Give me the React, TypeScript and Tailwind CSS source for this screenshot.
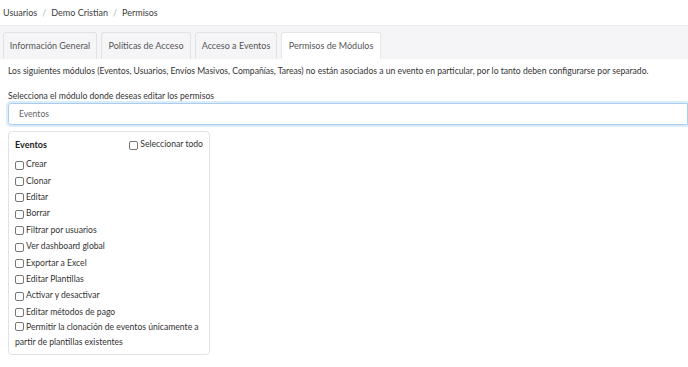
import React from "react";

const tabs = [
  { label: "Información General", width: "w-[94px]" },
  { label: "Políticas de Acceso", width: "w-[90px]" },
  { label: "Acceso a Eventos", width: "w-[82px]" },
  { label: "Permisos de Módulos", width: "w-[100px]", active: true },
];

const permisos = [
  "Crear",
  "Clonar",
  "Editar",
  "Borrar",
  "Filtrar por usuarios",
  "Ver dashboard global",
  "Exportar a Excel",
  "Editar Plantillas",
  "Activar y desactivar",
  "Editar métodos de pago",
];

function Box() {
  return <span className="mt-[1px] inline-block h-[9px] w-[9px] shrink-0 rounded-[2px] border border-[#767676] bg-white" />;
}

export default function App() {
  return (
    <div className="h-[367px] w-[688px] overflow-hidden bg-white font-['Lato',sans-serif] text-[8.6px] text-[#333]">
      <div className="flex h-[26px] items-center gap-[5px] border-b border-[#ececec] pl-[3px] text-[9px] text-[#3d3d3d]">
        <span>Usuarios</span>
        <span className="text-[#b5b5b5]">/</span>
        <span>Demo Cristian</span>
        <span className="text-[#b5b5b5]">/</span>
        <span>Permisos</span>
      </div>

      <div className="flex h-[33px] items-end gap-[4px] bg-[#f5f5f7] pl-[3px]">
        {tabs.map((t) => (
          <div
            key={t.label}
            className={`flex h-[27px] ${t.width} items-center justify-center rounded-t-[3px] border border-b-0 text-[9px] ${
              t.active ? "border-[#e6e6e6] bg-white text-[#555]" : "border-[#e2e2e4] bg-[#f5f5f7] text-[#555]"
            }`}
          >
            {t.label}
          </div>
        ))}
      </div>

      <div className="px-[8px]">
        <p className="mt-[7px] leading-[11px]">
          Los siguientes módulos (Eventos, Usuarios, Envíos Masivos, Compañías, Tareas) no están asociados a un evento en particular, por lo
          tanto deben configurarse por separado.
        </p>
        <div className="mt-[14px] leading-[11px]">Selecciona el módulo donde deseas editar los permisos</div>
        <div className="mr-[-8px] mt-[1px] flex h-[22px] items-center rounded-l-[3px] border border-[#a9cdef] pl-[10px] text-[#666] shadow-[0_0_0_2px_rgba(180,212,242,0.45)]">
          Eventos
        </div>

        <div className="mt-[6px] w-[202px] rounded-[4px] border border-[#e2e2e2] px-[6px] pb-[5px] pt-[6px]">
          <div className="flex items-center justify-between">
            <span className="text-[9px] font-bold text-[#222]">Eventos</span>
            <label className="flex items-center gap-[2px] text-[#333]">
              <Box />
              Seleccionar todo
            </label>
          </div>
          <div className="mt-[5px] flex flex-col">
            {permisos.map((p) => (
              <label key={p} className="flex h-[16.4px] items-center gap-[2px]">
                <Box />
                {p}
              </label>
            ))}
            <div className="leading-[14px]">
              <span className="mr-[2px] inline-block align-[-1px]">
                <Box />
              </span>
              Permitir la clonación de eventos únicamente a partir de plantillas existentes
            </div>
          </div>
        </div>
      </div>
    </div>
  );
}
